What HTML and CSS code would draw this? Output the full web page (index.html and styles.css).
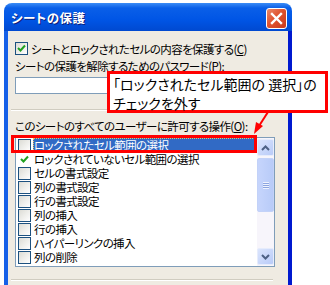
FILE: index.html
```html
<!DOCTYPE html>
<html lang="ja">
<head>
    <meta charset="UTF-8">
    <title>シートの保護</title>
    <link rel="stylesheet" href="styles.css">
</head>
<body>
    <div class="window">
        <div class="titlebar">
            <span class="title">シートの保護</span>
            <span class="close">
                <svg width="13" height="13" viewBox="0 0 13 13"><path d="M2 2 L11 11 M11 2 L2 11" stroke="#fff" stroke-width="2.4" stroke-linecap="square"/></svg>
            </span>
        </div>
        <div class="body">
            <div class="check-row">
                <span class="cb"><svg width="11" height="11" viewBox="0 0 11 11"><path d="M2 5 L4.5 7.5 L9 2.5" fill="none" stroke="#21a121" stroke-width="2"/></svg></span>
                <span>シートとロックされたセルの内容を保護する(<u>C</u>)</span>
            </div>
            <div class="field-label">シートの保護を解除するためのパスワード(<u>P</u>):</div>
            <div class="input"></div>
            <div class="sep"></div>
            <div class="field-label">このシートのすべてのユーザーに許可する操作(<u>O</u>):</div>
            <div class="listbox">
                <ul class="items">
                    <li class="selected"><span class="box"></span><span class="text">ロックされたセル範囲の選択</span></li>
                    <li><span class="box mark"><svg width="11" height="11" viewBox="0 0 11 11"><path d="M2 5 L4.5 7.5 L9 2.5" fill="none" stroke="#21a121" stroke-width="2"/></svg></span><span class="text">ロックされていないセル範囲の選択</span></li>
                    <li><span class="box"></span><span class="text">セルの書式設定</span></li>
                    <li><span class="box"></span><span class="text">列の書式設定</span></li>
                    <li><span class="box"></span><span class="text">行の書式設定</span></li>
                    <li><span class="box"></span><span class="text">列の挿入</span></li>
                    <li><span class="box"></span><span class="text">行の挿入</span></li>
                    <li><span class="box"></span><span class="text">ハイパーリンクの挿入</span></li>
                    <li><span class="box"></span><span class="text">列の削除</span></li>
                </ul>
                <div class="scrollbar">
                    <div class="sb-btn">
                        <svg width="9" height="6" viewBox="0 0 9 6"><path d="M1 5 L4.5 1.5 L8 5" fill="none" stroke="#4d6185" stroke-width="2"/></svg>
                    </div>
                    <div class="sb-thumb">
                        <span class="grip"></span>
                    </div>
                    <div class="sb-track"></div>
                    <div class="sb-btn">
                        <svg width="9" height="6" viewBox="0 0 9 6"><path d="M1 1 L4.5 4.5 L8 1" fill="none" stroke="#4d6185" stroke-width="2"/></svg>
                    </div>
                </div>
            </div>
            <div class="sep sep-bottom"></div>
        </div>
    </div>

    <!-- annotation over the dialog -->
    <div class="callout">「ロックされたセル範囲の 選択」の<br>チェックを外す</div>
    <div class="highlight"></div>
    <svg class="arrow" width="30" height="30" viewBox="0 0 30 30">
        <path d="M17 0 L8 14" stroke="#ff0000" stroke-width="2"/>
        <path d="M3 22 L5 10 L12 14 Z" fill="#ff0000"/>
    </svg>
</body>
</html>
```

FILE: styles.css
```css
body {
    margin: 0;
    background-color: #ffffff;
    font-family: "Noto Sans CJK JP", sans-serif;
    font-size: 11.5px;
    letter-spacing: -0.6px;
    font-feature-settings: "palt";
    color: #000;
    overflow: hidden;
    height: 285px;
}

.window {
    width: 288px;
    margin: 3px 0 0 4px;
}

.titlebar {
    height: 28px;
    display: flex;
    align-items: center;
    justify-content: space-between;
    padding: 0 5px 0 7px;
    border-radius: 8px 8px 0 0;
    background: linear-gradient(#3b8cf5 0%, #0a5fe8 18%, #0055e5 60%, #0049d0 100%);
}

.title {
    color: #fff;
    font-weight: bold;
    font-size: 12.5px;
    letter-spacing: 0.5px;
    text-shadow: 1px 1px 0 #0a1e7a;
}

.close {
    width: 19px;
    height: 19px;
    margin-top: 3px;
    border: 1px solid #fff;
    border-radius: 3px;
    background: linear-gradient(135deg, #e98a6b 0%, #e0532f 45%, #c8391c 100%);
    display: flex;
    align-items: center;
    justify-content: center;
}

.body {
    height: 260px;
    background-color: #efebe2;
    border-left: 4px solid #1660e8;
    border-right: 4px solid #0019cf;
    padding: 11px 7px 0;
}

.check-row {
    display: flex;
    align-items: center;
    height: 13px;
    gap: 3px;
}

.cb {
    width: 11px;
    height: 11px;
    border: 1px solid #1c5180;
    background: linear-gradient(135deg, #dcdcd5, #fff);
    display: flex;
}

.field-label {
    height: 14px;
    line-height: 14px;
    margin-top: 4px;
    white-space: nowrap;
}

.input {
    width: 258px;
    height: 15px;
    margin-top: 4px;
    border: 1px solid #7f9db9;
    background-color: #fff;
}

.sep {
    margin: 15px 0 0 -4px;
    width: 262px;
    height: 1px;
    background-color: #d0ccc0;
    border-bottom: 1px solid #fff;
}

.sep + .field-label {
    margin-top: 8px;
}

.sep-bottom {
    margin-top: 12px;
}

.listbox {
    width: 258px;
    height: 128px;
    margin-top: 4px;
    border: 1px solid #7f9db9;
    background-color: #fff;
    display: flex;
}

.items {
    list-style: none;
    margin: 0;
    padding: 0;
    flex: 1;
}

.items li {
    height: 14px;
    display: flex;
    align-items: center;
    padding-left: 2px;
    white-space: nowrap;
}

.box {
    width: 11px;
    height: 11px;
    border: 1px solid #1c5180;
    background: linear-gradient(135deg, #dcdcd5, #fff);
    display: flex;
}

.box.mark {
    border-color: transparent;
    background: none;
}

.text {
    margin-left: 2px;
    padding-left: 1px;
    height: 14px;
    line-height: 14px;
    flex: 1;
}

.selected .text {
    background-color: #316ac5;
    color: #fff;
    outline: 1px dotted #f0c060;
    outline-offset: -1px;
}

.scrollbar {
    width: 17px;
    display: flex;
    flex-direction: column;
    background-color: #f7f5fb;
}

.sb-btn {
    height: 15px;
    margin: 1px 0;
    border: 1px solid #e6ecfc;
    border-radius: 2px;
    background: linear-gradient(135deg, #dbe5fd, #b9cbf8);
    display: flex;
    align-items: center;
    justify-content: center;
}

.sb-thumb {
    height: 52px;
    margin-top: 1px;
    border: 1px solid #c3d2f8;
    border-radius: 2px;
    background: linear-gradient(90deg, #c6d5fc, #b8cbf8);
    display: flex;
    align-items: center;
    justify-content: center;
}

.grip {
    width: 6px;
    height: 7px;
    background: repeating-linear-gradient(#eef3fe 0 1px, #8ca5e0 1px 2px);
}

.sb-track {
    flex: 1;
}

.callout {
    position: absolute;
    left: 107px;
    top: 71px;
    width: 209px;
    height: 35px;
    padding: 1px 3px 0;
    border: 3px solid #ff0000;
    background-color: #fff;
    font-size: 14px;
    letter-spacing: 0;
    line-height: 19px;
    white-space: nowrap;
}

.highlight {
    position: absolute;
    left: 11px;
    top: 135px;
    width: 240px;
    height: 12px;
    border: 3px solid #ff0000;
}

.arrow {
    position: absolute;
    left: 251px;
    top: 112px;
}
```
